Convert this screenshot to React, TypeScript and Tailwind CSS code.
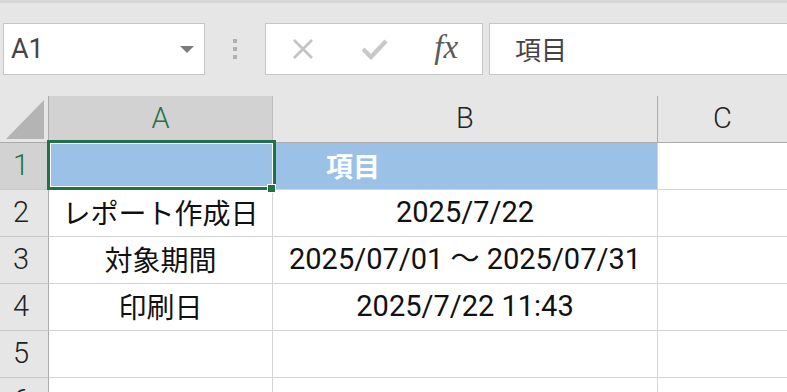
import React from "react";

const F = "font-['Roboto','Noto_Sans_CJK_JP',sans-serif]";

function XIcon() {
  return (
    <svg width="22" height="22" viewBox="0 0 22 22">
      <path d="M2 2 L20 20 M20 2 L2 20" stroke="#c4c4c4" strokeWidth="2.8" strokeLinecap="butt" fill="none" />
    </svg>
  );
}

function CheckIcon() {
  return (
    <svg width="26" height="22" viewBox="0 0 26 22">
      <path d="M1 11 L9 19 L24 3" stroke="#c8c8c8" strokeWidth="4.4" strokeLinecap="butt" strokeLinejoin="miter" fill="none" />
    </svg>
  );
}

function Triangle() {
  return (
    <svg width="14" height="7" viewBox="0 0 14 7">
      <polygon points="0,0 14,0 7,7" fill="#7c7c7c" />
    </svg>
  );
}

function Corner() {
  return (
    <svg width="39" height="39" viewBox="0 0 39 39">
      <polygon points="0,39 38,0 38,39" fill="#b4b4b4" />
    </svg>
  );
}

const rows: { n: string; a: string; b: string }[] = [
  { n: "2", a: "レポート作成日", b: "2025/7/22" },
  { n: "3", a: "対象期間", b: "2025/07/01 〜 2025/07/31" },
  { n: "4", a: "印刷日", b: "2025/7/22 11:43" },
  { n: "5", a: "", b: "" },
  { n: "6", a: "", b: "" },
];

export default function App() {
  return (
    <div className={`w-[787px] h-[392px] overflow-hidden bg-white ${F}`}>
      {/* formula bar area */}
      <div className="h-[96px] bg-[#e6e6e6] border-t-[3px] border-[#d6d6d6] flex items-start pt-[20px]">
        <div className="ml-[3px] w-[202px] h-[52px] bg-white border border-[#c6c6c6] flex items-center justify-between pl-[7px] pr-[10px]">
          <span className="text-[27px] text-[#444] leading-none">A1</span>
          <Triangle />
        </div>
        <div className="w-[60px] h-[52px] flex flex-col items-center justify-center gap-[4px]">
          <div className="w-[4px] h-[4px] bg-[#b0b0b0]" />
          <div className="w-[4px] h-[4px] bg-[#b0b0b0]" />
          <div className="w-[4px] h-[4px] bg-[#b0b0b0]" />
        </div>
        <div className="w-[218px] h-[52px] bg-white border border-[#c6c6c6] flex items-center pl-[1px]">
          <div className="w-[72px] flex justify-center"><XIcon /></div>
          <div className="w-[72px] flex justify-center"><CheckIcon /></div>
          <div className="w-[72px] flex justify-center">
            <span className="font-['Liberation_Serif',serif] italic text-[33px] text-[#5a5a5a] leading-none pb-[4px]">fx</span>
          </div>
        </div>
        <div className="ml-[6px] flex-1 h-[52px] bg-white border border-r-0 border-[#c6c6c6] flex items-center pl-[25px]">
          <span className="text-[26px] text-[#444] font-['Noto_Sans_CJK_JP',sans-serif] leading-none">項目</span>
        </div>
      </div>

      {/* grid */}
      <div className="relative grid grid-cols-[49px_224px_385px_1fr]">
        {/* header row */}
        <div className="h-[47px] bg-[#e6e6e6] border-r border-b border-[#ababab] flex items-end justify-end pr-[3px] pb-[3px]">
          <Corner />
        </div>
        <div className="h-[47px] bg-[#d2d2d2] border-r border-b border-r-[#bdbdbd] border-b-[#ababab] flex items-center justify-center text-[29px] font-light text-[#217346]">A</div>
        <div className="h-[47px] bg-[#e6e6e6] border-r border-b border-r-[#ababab] border-b-[#ababab] flex items-center justify-center text-[29px] font-light text-[#222]">B</div>
        <div className="h-[47px] bg-[#e6e6e6] border-b border-[#ababab] flex items-center justify-center text-[29px] font-light text-[#222]">C</div>

        {/* row 1 */}
        <div className="h-[47px] bg-[#d2d2d2] border-r border-b border-r-[#ababab] border-b-[#c8c8c8] flex items-center justify-center pr-[6px] text-[29px] font-light text-[#217346]">1</div>
        <div className="col-span-2 h-[47px] bg-[#9bc2e6] border-r border-b border-[#d4d4d4] flex items-center justify-center pb-[2px]">
          <span className="text-white font-bold text-[27px] font-['Noto_Sans_CJK_JP',sans-serif] leading-none">項目</span>
        </div>
        <div className="h-[47px] border-b border-[#d4d4d4]" />

        {rows.map((r) => (
          <React.Fragment key={r.n}>
            <div className="h-[47px] bg-[#e6e6e6] border-r border-b border-r-[#ababab] border-b-[#c8c8c8] flex items-center justify-center pr-[6px] text-[29px] font-light text-[#222]">{r.n}</div>
            <div className="h-[47px] border-r border-b border-[#d4d4d4] flex items-center justify-center pb-[3px] text-[28px] text-[#111] font-['Noto_Sans_CJK_JP',sans-serif] whitespace-nowrap leading-none">{r.a}</div>
            <div className="h-[47px] border-r border-b border-[#d4d4d4] flex items-center justify-center text-[29px] text-[#111] whitespace-nowrap">{r.b}</div>
            <div className="h-[47px] border-b border-[#d4d4d4]" />
          </React.Fragment>
        ))}

        {/* selection overlay */}
        <div className="absolute left-[47px] top-[44px] w-[229px] h-[50px] border-[3px] border-[#217346] shadow-[inset_0_0_0_1px_white] pointer-events-none" />
        <div className="absolute left-[267px] top-[88px] w-[9px] h-[9px] bg-[#217346] border border-white pointer-events-none" />
      </div>
    </div>
  );
}
